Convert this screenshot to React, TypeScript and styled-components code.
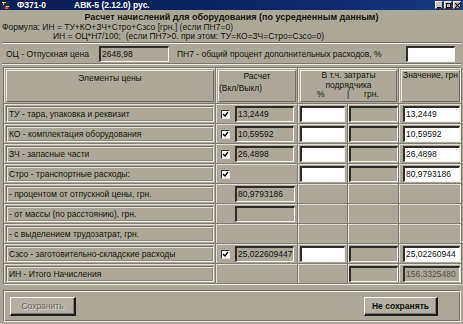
import React from "react";
import styled, { createGlobalStyle } from "styled-components";

const GlobalStyle = createGlobalStyle`
  html, body {
    margin: 0;
    padding: 0;
    background: #aca899;
  }
  body {
    font-family: "Liberation Sans", Arial, sans-serif;
  }
`;

const Window = styled.div`
  width: 463px;
  height: 324px;
  display: flex;
  flex-direction: column;
  background: #aca899;
  color: #141509;
  overflow: hidden;
`;

const TitleBar = styled.div`
  height: 10px;
  display: flex;
  align-items: center;
  padding: 0 2px 0 1px;
  background: linear-gradient(to right, #0a1c52, #10286a 70%, #1a3a82);
  color: #fff;
  font-size: 8.5px;
  font-weight: bold;
`;

const TitleText = styled.span<{ $left: number }>`
  margin-left: ${(p) => p.$left}px;
  line-height: 10px;
  white-space: nowrap;
`;

const WinButtons = styled.div`
  margin-left: auto;
  display: flex;
  gap: 1px;
`;

const WinButton = styled.div`
  width: 8px;
  height: 8px;
  box-sizing: border-box;
  background: #c8c4b8;
  border: 1px solid;
  border-color: #f4f2ea #303030 #303030 #f4f2ea;
  display: flex;
  align-items: center;
  justify-content: center;
`;

const Header = styled.div`
  height: 32px;
  padding-top: 3px;
  box-sizing: border-box;
  font-size: 8.5px;
  line-height: 9.5px;
`;

const Heading = styled.div`
  text-align: center;
  font-weight: bold;
  font-size: 9px;
`;

const FormulaLine = styled.div<{ $indent: number }>`
  padding-left: ${(p) => p.$indent}px;
  white-space: nowrap;
`;

const Groove = styled.div`
  height: 0;
  border-top: 1px solid #77746a;
  border-bottom: 1px solid #ecebe4;
  margin: 0 2px;
`;

const PriceRow = styled.div`
  height: 19px;
  display: flex;
  align-items: center;
  font-size: 8.5px;
  padding-left: 6px;
`;

const PriceLabel = styled.span<{ $width?: number }>`
  width: ${(p) => (p.$width ? `${p.$width}px` : "auto")};
  white-space: nowrap;
`;

const Field = styled.div<{ $white?: boolean; $width: number; $dim?: boolean; $gap?: number; $push?: boolean }>`
  box-sizing: border-box;
  flex: none;
  width: ${(p) => p.$width}px;
  height: 16px;
  margin-left: ${(p) => (p.$push ? "auto" : "0")};
  margin-right: ${(p) => p.$gap ?? 0}px;
  background: ${(p) => (p.$white ? "#ffffff" : "#aca899")};
  color: ${(p) => (p.$dim ? "#55534c" : "#111")};
  border-style: solid;
  border-width: 2px 1px 1px 2px;
  border-color: #2e2c28 #f4f3ee #f4f3ee #2e2c28;
  font-size: 8.5px;
  line-height: 13px;
  padding-left: 1px;
  white-space: nowrap;
  overflow: hidden;
`;

const Table = styled.div`
  margin: 2px 2px 0 3px;
  display: grid;
  grid-template-columns: 212px 82px 50px 51px 63px;
  grid-template-rows: 36px repeat(9, 20px);
  border: 1px solid;
  border-color: #77746a #ecebe4 #ecebe4 #77746a;
  font-size: 8.5px;
`;

const Cell = styled.div<{ $pad?: number }>`
  display: flex;
  align-items: center;
  padding-left: ${(p) => p.$pad ?? 2}px;
  box-sizing: border-box;
  box-shadow: inset -1px -1px #7e7b72, inset 1px 1px #e4e2d9;
`;

const HeadCell = styled.div<{ $span?: number }>`
  grid-column: span ${(p) => p.$span ?? 1};
  padding: 2px;
  box-sizing: border-box;
  box-shadow: inset -1px -1px #7e7b72, inset 1px 1px #e4e2d9;
`;

const HeadInner = styled.div<{ $align?: string; $top?: number }>`
  height: 100%;
  box-sizing: border-box;
  border: 1px solid;
  border-color: #ecebe4 #6f6c63 #6f6c63 #ecebe4;
  padding-top: ${(p) => p.$top ?? 0}px;
  padding-left: ${(p) => (p.$align === "left" ? 1 : 0)}px;
  text-align: ${(p) => p.$align ?? "center"};
  line-height: 9.5px;
  white-space: nowrap;
`;

const HeadLeft = styled.div`
  text-align: left;
  margin-top: 2px;
`;

const HeadSub = styled.div`
  display: flex;
  padding-left: 16px;
`;

const SubMark = styled.span<{ $width: number }>`
  width: ${(p) => p.$width}px;
  text-align: left;
`;

const LabelBox = styled.div`
  flex: 1;
  height: 16px;
  margin-right: 2px;
  box-sizing: border-box;
  border: 1px solid;
  border-color: #6f6c63 #f2f1ec #f2f1ec #6f6c63;
  box-shadow: inset 1px 1px #e6e4dc, inset -1px -1px #8a877d;
  padding-left: 2px;
  line-height: 14px;
  white-space: nowrap;
`;

const CheckBox = styled.div<{ $hidden?: boolean }>`
  visibility: ${(p) => (p.$hidden ? "hidden" : "visible")};
  flex: none;
  width: 9px;
  height: 9px;
  box-sizing: border-box;
  background: #fff;
  border-style: solid;
  border-width: 1px;
  border-color: #3a3834 #e8e6de #e8e6de #3a3834;
  margin-right: 5px;
  display: flex;
  align-items: center;
  justify-content: center;
`;

const Footer = styled.div`
  margin: 5px 2px 0 3px;
  height: 32px;
  box-sizing: border-box;
  border: 1px solid;
  border-color: #77746a #ecebe4 #ecebe4 #77746a;
  box-shadow: inset 1px 1px #ecebe4, inset -1px -1px #77746a;
  display: flex;
  align-items: center;
  justify-content: space-between;
  padding: 0 22px 0 6px;
`;

const Button = styled.div<{ $disabled?: boolean; $width: number }>`
  width: ${(p) => p.$width}px;
  height: 19px;
  box-sizing: border-box;
  display: flex;
  align-items: center;
  justify-content: center;
  font-size: 8.5px;
  font-weight: ${(p) => (p.$disabled ? "normal" : "bold")};
  color: ${(p) => (p.$disabled ? "#6b6860" : "#121209")};
  text-shadow: ${(p) => (p.$disabled ? "1px 1px #dedcd4" : "none")};
  background: #b4b0a4;
  border-style: solid;
  border-width: 1px 2px 2px 1px;
  border-color: #f4f3ee #1c1b18 #1c1b18 #f4f3ee;
  box-shadow: inset -1px -1px #7e7b72;
`;

type Row = {
  label: string;
  check?: boolean;
  calc?: string;
  calcOnly?: string;
  contractor?: boolean;
  grnOnly?: boolean;
  value?: string;
  total?: boolean;
};

const rows: Row[] = [
  { label: "ТУ - тара, упаковка и реквизит", check: true, calc: "13,2449", contractor: true, value: "13,2449" },
  { label: "КО - комплектация оборудования", check: true, calc: "10,59592", contractor: true, value: "10,59592" },
  { label: "ЗЧ - запасные части", check: true, calc: "26,4898", contractor: true, value: "26,4898" },
  { label: "Стро - транспортные расходы:", check: true, contractor: true, value: "80,9793186" },
  { label: "- процентом от отпускной цены, грн.", calcOnly: "80,9793186" },
  { label: "- от массы (по расстоянию), грн.", calcOnly: "" },
  { label: "- с выделением трудозатрат, грн." },
  { label: "Сзсо - заготовительно-складские расходы", check: true, calc: "25,022609447", contractor: true, value: "25,02260944" },
  { label: "ИН - Итого Начисления", grnOnly: true, value: "156,3325480", total: true },
];

function Tick() {
  return (
    <svg width="7" height="7" viewBox="0 0 7 7">
      <path d="M1 3 L3 5 L6 1" stroke="#000" strokeWidth="1.4" fill="none" />
    </svg>
  );
}

function AppIcon() {
  return (
    <svg width="9" height="9" viewBox="0 0 9 9">
      <rect x="0" y="0" width="9" height="9" fill="#1c2a60" />
      <rect x="1" y="1" width="4" height="1" fill="#e8e040" />
      <rect x="2" y="1" width="1" height="3" fill="#e8e040" />
      <rect x="4" y="5" width="1" height="3" fill="#e84020" />
      <rect x="5" y="5" width="3" height="1" fill="#f0d030" />
      <rect x="5" y="6" width="2" height="2" fill="#e84020" />
    </svg>
  );
}

export default function App() {
  return (
    <Window>
      <GlobalStyle />
      <TitleBar>
        <AppIcon />
        <TitleText $left={7}>Ф371-0</TitleText>
        <TitleText $left={28}>АВК-5 (2.12.0) рус.</TitleText>
        <WinButtons>
          <WinButton>
            <svg width="5" height="5" viewBox="0 0 5 5">
              <rect x="0" y="4" width="4" height="1" fill="#000" />
            </svg>
          </WinButton>
          <WinButton>
            <svg width="5" height="5" viewBox="0 0 5 5">
              <rect x="0.5" y="0.5" width="4" height="4" stroke="#000" fill="none" />
              <rect x="0" y="0" width="5" height="1.2" fill="#000" />
            </svg>
          </WinButton>
          <WinButton>
            <svg width="5" height="5" viewBox="0 0 5 5">
              <path d="M0 0 L5 5 M5 0 L0 5" stroke="#000" strokeWidth="1.2" />
            </svg>
          </WinButton>
        </WinButtons>
      </TitleBar>

      <Header>
        <Heading>Расчет начислений для оборудования (по усредненным данным)</Heading>
        <FormulaLine $indent={2}>Формула: ИН = ТУ+КО+ЗЧ+Стро+Сзсо [грн.] (если ПН7=0)</FormulaLine>
        <FormulaLine $indent={53}>ИН = ОЦ*Н7/100;&nbsp; (если ПН7&gt;0. при этом: ТУ=КО=ЗЧ=Стро=Сзсо=0)</FormulaLine>
      </Header>

      <Groove />
      <PriceRow>
        <PriceLabel $width={93}>ОЦ - Отпускная цена</PriceLabel>
        <Field $width={70} $gap={8}>2648,98</Field>
        <PriceLabel>ПН7 - общий процент дополнительных расходов, %</PriceLabel>
        <Field $white $width={49} $gap={8} $push />
      </PriceRow>
      <Groove />

      <Table>
        <HeadCell>
          <HeadInner $top={3}>Элементы цены</HeadInner>
        </HeadCell>
        <HeadCell>
          <HeadInner $top={1}>
            Расчет
            <HeadLeft>(Вкл/Выкл)</HeadLeft>
          </HeadInner>
        </HeadCell>
        <HeadCell $span={2}>
          <HeadInner>
            В т.ч. затраты
            <div>подрядчика</div>
            <HeadSub>
              <SubMark $width={30}>%</SubMark>
              <SubMark $width={17}>|</SubMark>
              <SubMark $width={30}>грн.</SubMark>
            </HeadSub>
          </HeadInner>
        </HeadCell>
        <HeadCell>
          <HeadInner $align="left">Значение, грн</HeadInner>
        </HeadCell>

        {rows.map((r) => (
          <React.Fragment key={r.label}>
            <Cell $pad={2}>
              <LabelBox>{r.label}</LabelBox>
            </Cell>
            <Cell $pad={5}>
              {r.check && (
                <CheckBox>
                  <Tick />
                </CheckBox>
              )}
              {r.calcOnly !== undefined && <CheckBox $hidden />}
              {r.calc !== undefined && <Field $width={59}>{r.calc}</Field>}
              {r.calcOnly !== undefined && <Field $width={60}>{r.calcOnly}</Field>}
            </Cell>
            <Cell $pad={2}>{r.contractor && <Field $white $width={45} />}</Cell>
            <Cell $pad={1}>{(r.contractor || r.grnOnly) && <Field $width={49} />}</Cell>
            <Cell $pad={4}>
              {r.value !== undefined && (
                <Field $white={!r.total} $dim={r.total} $width={57}>
                  {r.value}
                </Field>
              )}
            </Cell>
          </React.Fragment>
        ))}
      </Table>

      <Footer>
        <Button $disabled $width={66}>
          Сохранить
        </Button>
        <Button $width={74}>Не сохранять</Button>
      </Footer>
    </Window>
  );
}
